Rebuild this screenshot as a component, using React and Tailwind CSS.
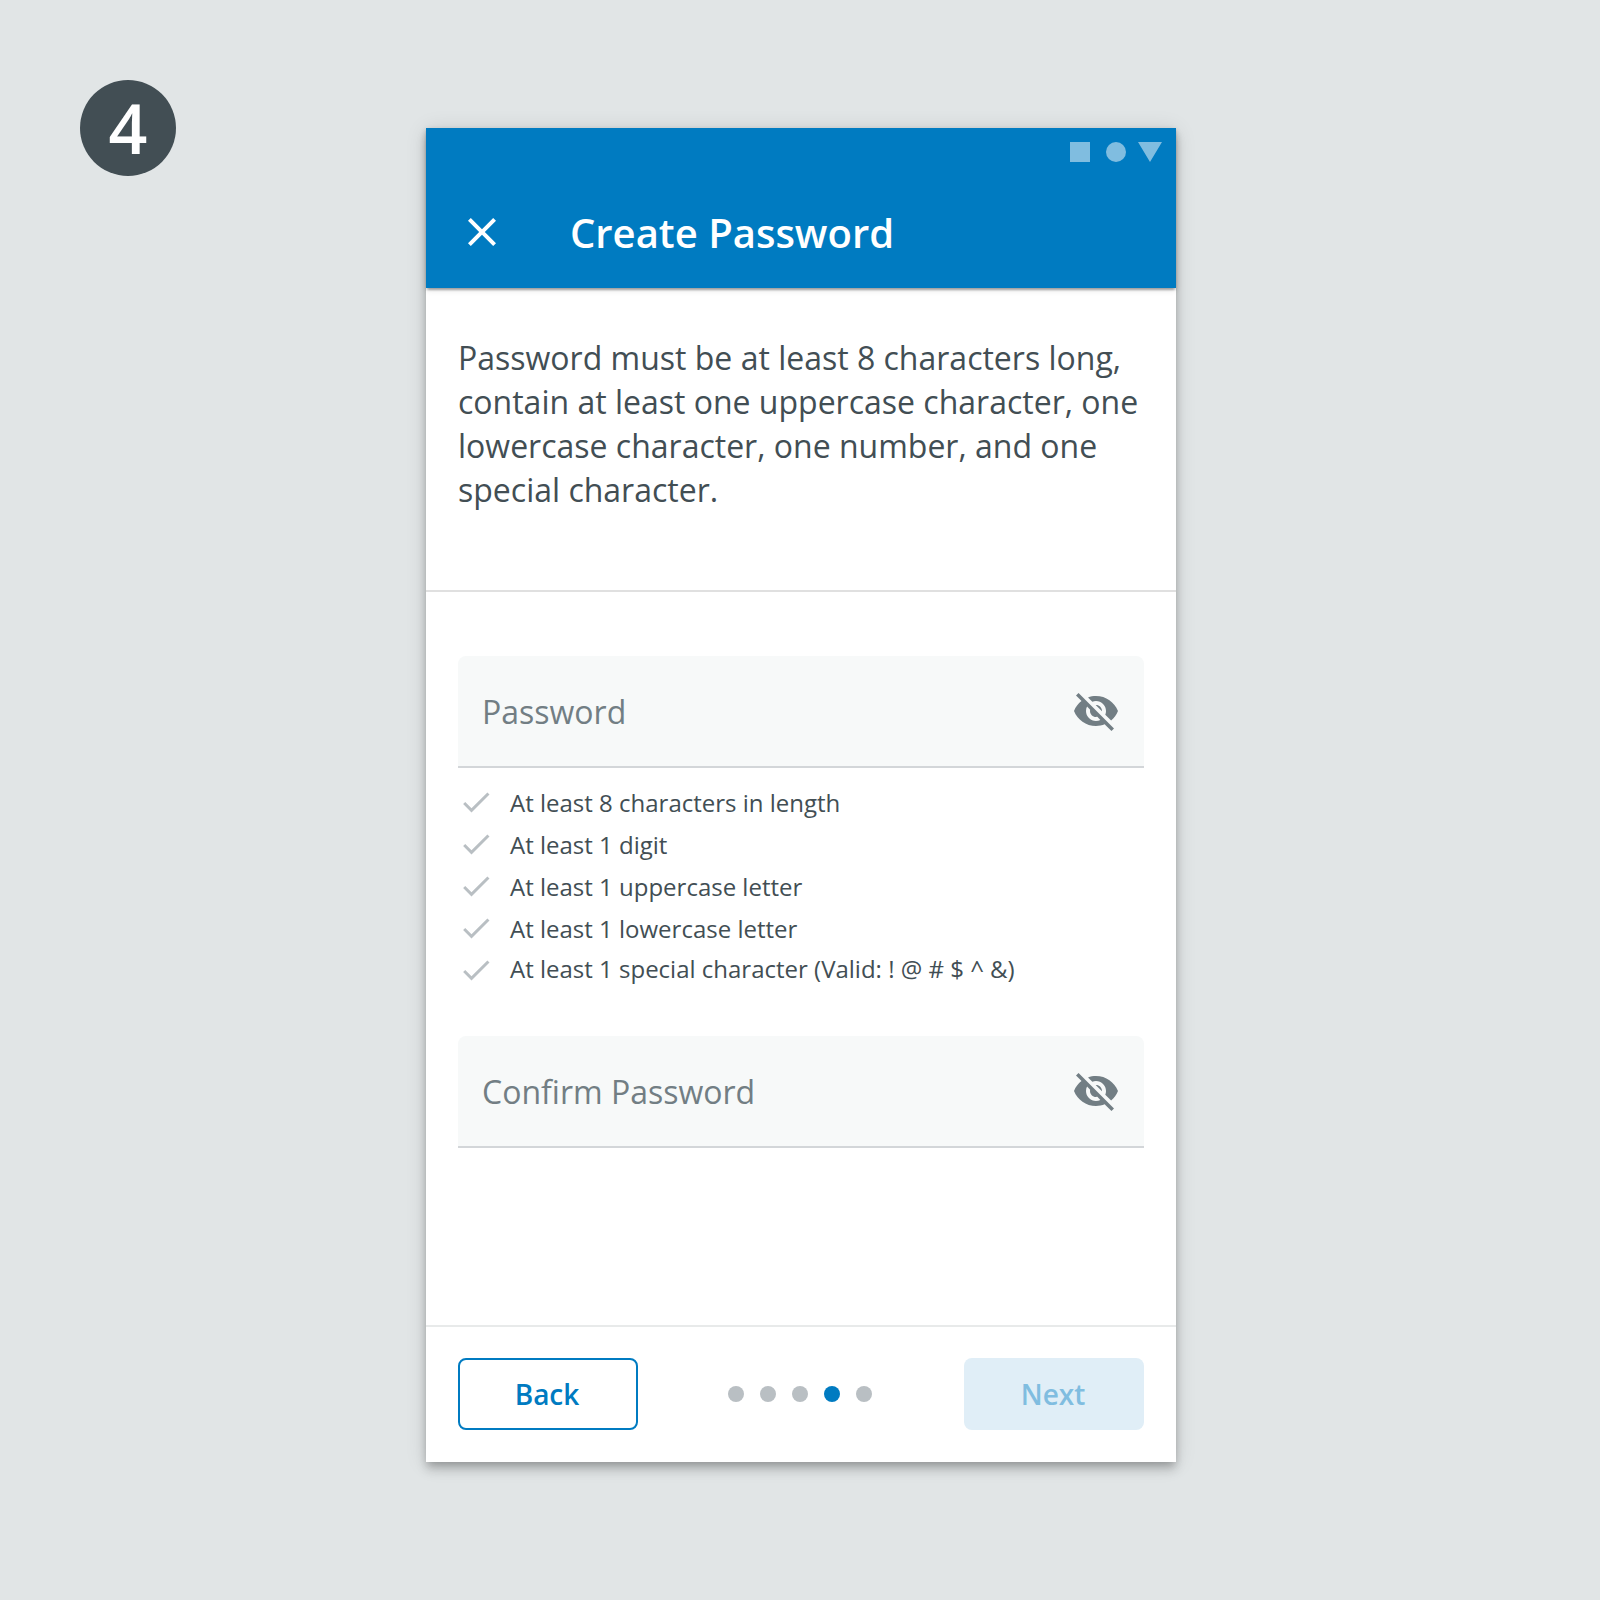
import React from "react";

const EyeOff = () => (
  <svg className="size-12 shrink-0" viewBox="0 0 24 24" fill="#727E84">
    <path d="M12 7c2.76 0 5 2.24 5 5 0 .65-.13 1.26-.36 1.83l2.92 2.92c1.51-1.26 2.7-2.89 3.43-4.75-1.73-4.39-6-7.5-11-7.5-1.4 0-2.74.25-3.98.7l2.16 2.16C10.74 7.13 11.35 7 12 7zM2 4.27l2.28 2.28.46.46C3.08 8.3 1.78 10.02 1 12c1.73 4.39 6 7.5 11 7.5 1.55 0 3.03-.3 4.38-.84l.42.42L19.73 22 21 20.73 3.27 3 2 4.27zM7.53 9.8l1.55 1.55c-.05.21-.08.43-.08.65 0 1.66 1.34 3 3 3 .22 0 .44-.03.65-.08l1.55 1.55c-.67.33-1.41.53-2.2.53-2.76 0-5-2.24-5-5 0-.79.2-1.53.53-2.2zm4.31-.78l3.15 3.15.02-.16c0-1.66-1.34-3-3-3l-.17.01z" />
  </svg>
);

const Field = ({ label }) => (
  <div>
    <div className="flex h-[110px] items-center justify-between rounded-t-lg bg-[#F7F9F9] px-6 text-[32px] text-[#727E84]">
      <span className="pt-0.5">{label}</span>
      <EyeOff />
    </div>
    <div className="h-0.5 bg-[#D3D6D9]" />
  </div>
);

const rules = [
  "At least 8 characters in length",
  "At least 1 digit",
  "At least 1 uppercase letter",
  "At least 1 lowercase letter",
  "At least 1 special character (Valid: ! @ # $ ^ &)",
];

export default function App() {
  return (
    <div className="flex h-[1600px] w-[1600px] bg-[#E1E5E6] font-['Open_Sans',sans-serif] text-[#424E54]">
      <div className="mt-20 ml-20 flex size-24 items-center justify-center rounded-full bg-[#424E54] text-[68px] font-semibold text-white">4</div>
      <main className="mt-32 ml-[250px] flex h-[1334px] w-[750px] flex-col bg-white shadow-[0_4px_8px_-2px_rgba(0,0,0,0.2),0_8px_10px_rgba(0,0,0,0.14),0_2px_20px_rgba(0,0,0,0.12)]">
        <header className="h-40 shrink-0 bg-[#007BC1] text-white shadow-[0_4px_2px_-2px_rgba(0,0,0,0.2),0_2px_2px_rgba(0,0,0,0.14),0_2px_6px_rgba(0,0,0,0.12)]">
          <div className="flex h-12 justify-end pr-[14px]">
            <svg className="h-12 w-24" viewBox="0 0 96 48" fill="#80BDE0">
              <path d="M4 14h20v20H4zM72 14h24L84 34z" />
              <circle cx="50" cy="24" r="10" />
            </svg>
          </div>
          <div className="flex h-28 items-center pl-8">
            <svg className="size-12" viewBox="0 0 24 24" fill="currentColor">
              <path d="M19 6.41L17.59 5 12 10.59 6.41 5 5 6.41 10.59 12 5 17.59 6.41 19 12 13.41 17.59 19 19 17.59 13.41 12z" />
            </svg>
            <h1 className="ml-16 pt-0.5 text-[40px] font-semibold">Create Password</h1>
          </div>
        </header>
        <section className="h-[304px] shrink-0 border-b-2 border-[#E0E0E0] px-8 pt-12 text-[32px] leading-[44px]">
          <p className="whitespace-nowrap">
            Password must be at least 8 characters long,<br />
            contain at least one uppercase character, one<br />
            lowercase character, one number, and one<br />
            special character.
          </p>
        </section>
        <section className="flex-1 px-8 pt-16">
          <Field label="Password" />
          <ul className="mt-[13px] mb-[45px] text-[24px]">
            {rules.map((rule) => (
              <li key={rule} className="group flex h-[42px] items-center">
                <svg className="size-9" viewBox="0 0 24 24" fill="#B9BFC3">
                  <path d="M9 16.17L4.83 12l-1.42 1.41L9 19 21 7l-1.41-1.41z" />
                </svg>
                <span className="pt-0.5 pl-4 group-last:pt-0 group-last:pb-0.5">{rule}</span>
              </li>
            ))}
          </ul>
          <Field label="Confirm Password" />
        </section>
        <footer className="flex h-[137px] shrink-0 items-end justify-between border-t-2 border-[#E8EAEA] px-8 pb-8 text-[28px] font-semibold">
          <button className="h-18 w-[180px] rounded-lg border-2 border-[#007BC1] pr-0.5 text-[#007BC1]">Back</button>
          <div className="flex h-18 items-center gap-4 pr-0.5">
            {[0, 1, 2, 3, 4].map((i) => (
              <span key={i} className={i === 3 ? "size-4 rounded-full bg-[#007BC1]" : "size-4 rounded-full bg-[#B9BFC3]"} />
            ))}
          </div>
          <button className="h-18 w-[180px] rounded-lg bg-[#E0EEF7] pr-0.5 text-[#80BDE0]">Next</button>
        </footer>
      </main>
    </div>
  );
}
